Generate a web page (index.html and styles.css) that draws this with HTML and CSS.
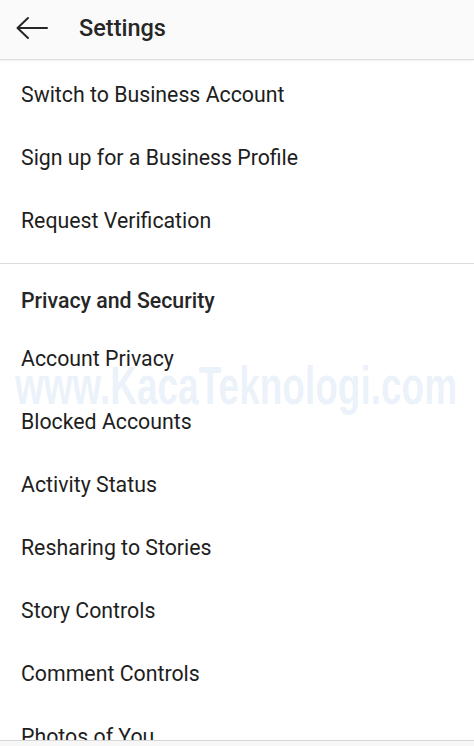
FILE: index.html
```html
<!DOCTYPE html>
<html lang="en">
<head>
    <meta charset="UTF-8">
    <meta name="viewport" content="width=device-width, initial-scale=1.0">
    <title>Settings</title>
    <link rel="stylesheet" href="styles.css">
</head>
<body>
    <div class="screen">
        <header class="topbar">
            <button class="back" aria-label="Back">
                <svg width="34" height="24" viewBox="0 0 34 24" fill="none" stroke="#262626" stroke-width="2" stroke-linecap="round" stroke-linejoin="round">
                    <path d="M32 12H3"/>
                    <path d="M13 2L2.5 12L13 22"/>
                </svg>
            </button>
            <h1>Settings</h1>
        </header>

        <main class="list">
            <div class="group">
                <div class="item">Switch to Business Account</div>
                <div class="item">Sign up for a Business Profile</div>
                <div class="item">Request Verification</div>
            </div>

            <div class="group bordered">
                <div class="section-title">Privacy and Security</div>
                <div class="item">Account Privacy</div>
                <div class="item">Blocked Accounts</div>
                <div class="item">Activity Status</div>
                <div class="item">Resharing to Stories</div>
                <div class="item">Story Controls</div>
                <div class="item">Comment Controls</div>
                <div class="item">Photos of You</div>
            </div>

            <div class="watermark">www.KacaTeknologi.com</div>
        </main>

        <footer class="bottombar"></footer>
    </div>
</body>
</html>
```

FILE: styles.css
```css
body {
    margin: 0;
    padding: 0;
    background-color: #ffffff;
    font-family: Roboto, "Noto Sans", Arial, sans-serif;
    color: #262626;
}

.screen {
    height: 746px;
    display: flex;
    flex-direction: column;
    overflow: hidden;
}

.topbar {
    flex: none;
    height: 59px;
    display: flex;
    align-items: center;
    background-color: #fafafa;
    border-bottom: 1px solid #dedede;
    box-shadow: 0 1px 2px rgba(0, 0, 0, 0.06);
    position: relative;
    z-index: 1;
}

.back {
    width: 79px;
    height: 59px;
    padding: 0 0 4px 15px;
    border: none;
    background: none;
    display: flex;
    align-items: center;
}

.topbar h1 {
    margin: 0 0 4px;
    font-size: 23.5px;
    font-weight: 500;
    color: #262626;
}

.list {
    flex: 1;
    position: relative;
    overflow: hidden;
    padding-top: 3px;
}

.group.bordered {
    margin-top: 11px;
    border-top: 1px solid #dbdbdb;
}

.item {
    height: 63px;
    display: flex;
    align-items: center;
    padding-left: 21px;
    font-size: 21.3px;
    color: #1e1e1e;
}

.section-title {
    height: 53px;
    margin-top: 10px;
    display: flex;
    align-items: center;
    padding-left: 21px;
    font-size: 21.3px;
    font-weight: 500;
    color: #262626;
}

.watermark {
    position: absolute;
    left: 15px;
    top: 299px;
    font-family: "Liberation Sans", Arial, sans-serif;
    font-size: 37px;
    line-height: 37px;
    font-weight: 700;
    color: rgba(150, 190, 225, 0.2);
    transform: scaleY(1.45);
    transform-origin: left top;
    pointer-events: none;
    white-space: nowrap;
}

.bottombar {
    flex: none;
    height: 5px;
    background-color: #f7f7f7;
    border-top: 1px solid #d6d6d6;
}
```
